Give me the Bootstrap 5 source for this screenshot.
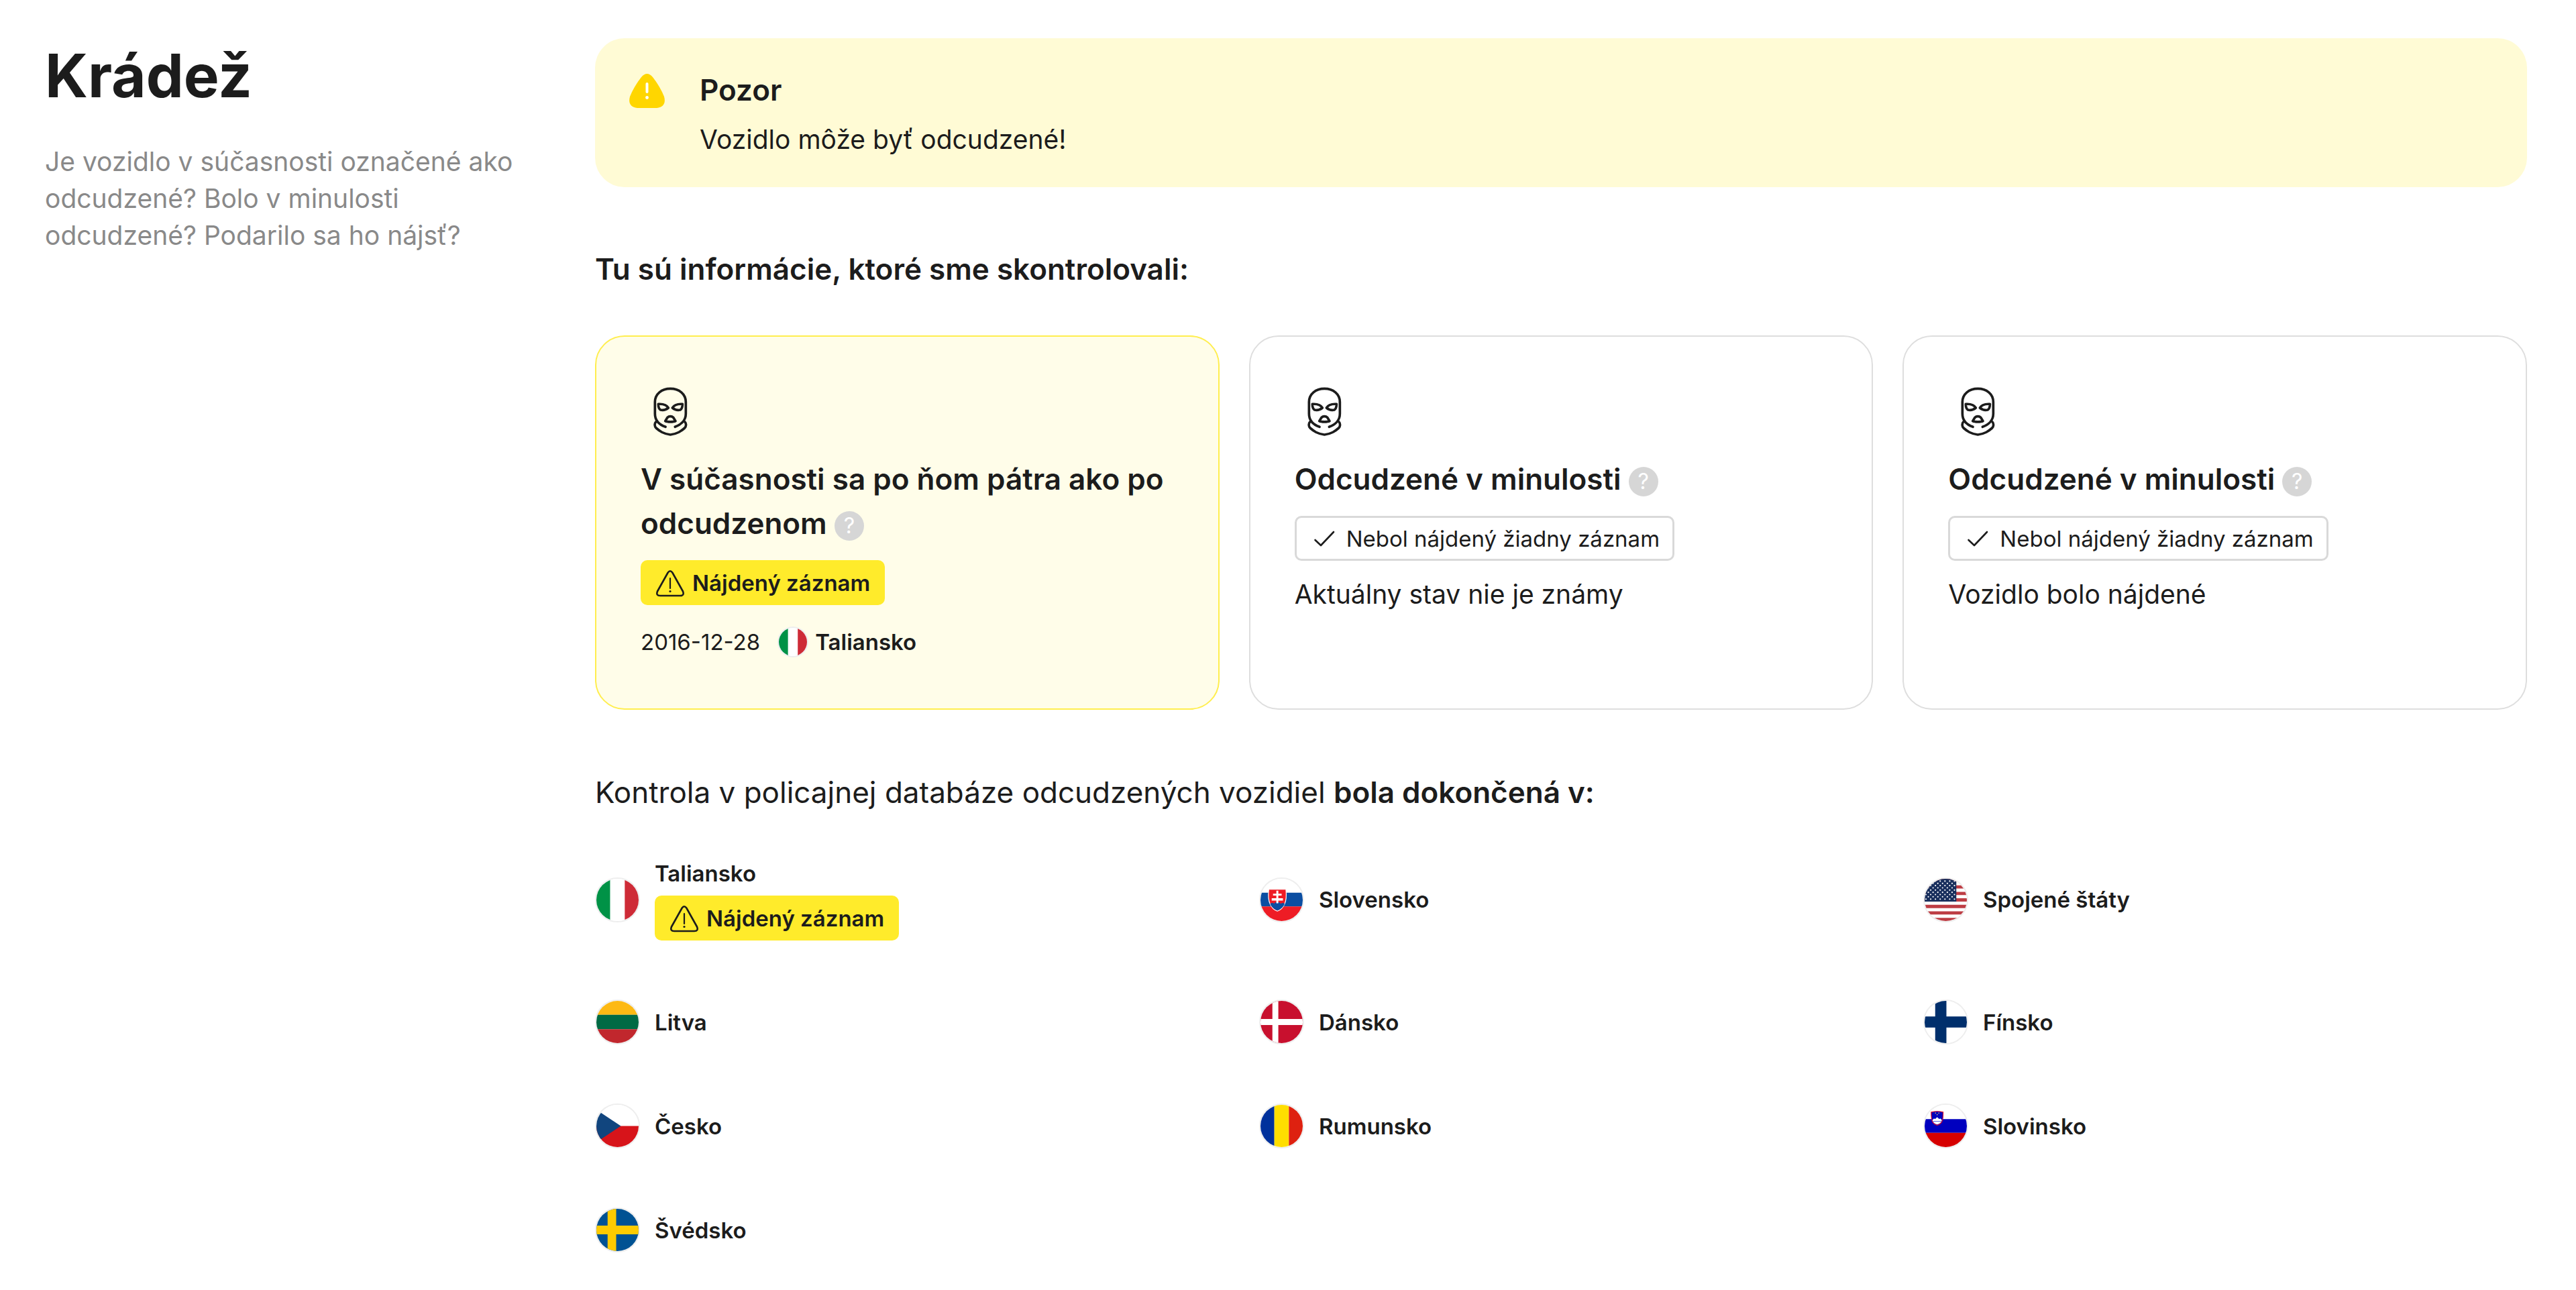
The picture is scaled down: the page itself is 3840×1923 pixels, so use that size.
<!DOCTYPE html>
<html lang="sk">
<head>
<meta charset="utf-8">
<meta name="viewport" content="width=device-width, initial-scale=1">
<title>Krádež</title>
<link href="https://cdn.jsdelivr.net/npm/bootstrap@5.3.0/dist/css/bootstrap.min.css" rel="stylesheet">
<script src="https://cdn.jsdelivr.net/npm/bootstrap@5.3.0/dist/js/bootstrap.bundle.min.js" defer></script>
<style>
  body { font-family: Inter, "Liberation Sans", sans-serif; color: #1c1c1c; font-size: 39px; line-height: 55px; background: #fff; }
  .page-wrap { padding: 57px 73px 57px 67px; }
  .intro-col { flex: 0 0 820px; padding: 3px 88px 0 0; }
  .intro-col h1 { font-size: 89px; line-height: 106px; font-weight: 700; margin-bottom: 47px; }
  .intro-col p { color: #898989; }
  .notice-box { background: #fffbd5; border-radius: 44px; padding: 44px 51px; gap: 52px; margin-bottom: 89px; }
  .notice-box svg { width: 53px; height: 51px; margin-top: 9px; }
  .notice-box h2 { margin-bottom: 13px; }
  .heading-md { font-size: 44px; line-height: 66px; font-weight: 600; }
  .section-title { margin-bottom: 66px; }
  .result-grid { display: grid; grid-template-columns: repeat(3, minmax(0, 1fr)); gap: 44px; margin-bottom: 90px; }
  .result-card { border: 2px solid #dedede; border-radius: 44px; padding: 66px; }
  .result-card.found { background: #fffde9; border-color: #ffee4f; }
  .result-icon { width: 88px; height: 88px; margin-bottom: 25px; }
  .result-card h3 { margin-bottom: 22px; }
  .help-btn { width: 44px; height: 44px; border-radius: 50%; background: #d6d6d6; color: #fff; font-size: 32px; line-height: 44px; font-weight: 400; vertical-align: middle; }
  .status-tag { height: 67px; padding: 0 22px; gap: 11px; border-radius: 10px; font-size: 33px; line-height: 44px; }
  .status-tag svg { width: 44px; height: 44px; }
  .tag-warn { background: #ffeb2b; font-weight: 600; }
  .tag-none { border: 3px solid #d9d9d9; background: #fff; padding: 0 19px; }
  .result-card .status-tag { margin-bottom: 22px; }
  .record-line { font-size: 33px; line-height: 66px; }
  .record-line time { margin-right: 26px; }
  .country-grid { display: grid; grid-template-columns: repeat(3, minmax(0, 1fr)); gap: 88px 90px; font-size: 33px; line-height: 44px; font-weight: 600; }
  .country-item { gap: 22px; }
  .country-item .status-tag { margin-top: 11px; }
  .flag-disc { width: 67px; height: 67px; border: 2px solid #eee; border-radius: 50%; background: #fff; }
  .flag-mini { width: 46px; height: 46px; margin-right: 10px; }
</style>
</head>
<body>
<svg class="d-none" aria-hidden="true">
  <symbol id="i-mask" viewBox="18 24 264 264">
    <g fill="none" stroke="#1c1c1c" stroke-width="11" stroke-linecap="round" stroke-linejoin="round">
      <path d="M129 229C104 220 82 201 82 170V118C82 82 112 58 151 58S220 82 220 118V170C220 201 197 220 172 229"/>
      <path d="M86 207C79 214 80 227 87 234C103 248 119 260 151 264C183 260 199 248 215 234C222 227 223 214 216 207"/>
      <path d="M97 127C113 126 134 130 142 144C132 152 121 156 107 153C99 149 97 138 97 127Z"/>
      <path d="M205 127C189 126 168 130 160 144C170 152 181 156 195 153C203 149 205 138 205 127Z"/>
      <path d="M138 187C145 180 157 180 164 187L174 203C165 208 137 208 128 203Z"/>
    </g>
  </symbol>
  <symbol id="i-warn" viewBox="0 0 44 44">
    <path d="M18.700 6.500Q22 2 25.300 6.500L41 34.500Q43.500 41 37 41H7Q.5 41 3 34.500Z" fill="none" stroke="#1c1c1c" stroke-width="2.600" stroke-linejoin="round"/>
    <path d="M22 15V30" stroke="#1c1c1c" stroke-width="2.200" stroke-linecap="round"/>
    <circle cx="22" cy="34.500" r="1.600" fill="#1c1c1c"/>
  </symbol>
  <symbol id="i-check" viewBox="0 0 44 44">
    <path d="M8.500 24L17 32L36 12" fill="none" stroke="#1c1c1c" stroke-width="2.600" stroke-linecap="round" stroke-linejoin="round"/>
  </symbol>
  <symbol id="f-it" viewBox="0 0 64 64"><path fill="#009246" d="M0 0h21v64H0z"/><path fill="#fff" d="M21 0h22v64H21z"/><path fill="#ce2b37" d="M43 0h21v64H43z"/></symbol>
  <symbol id="f-lt" viewBox="0 0 64 64"><path fill="#fdb913" d="M0 0h64v21H0z"/><path fill="#006a44" d="M0 21h64v22H0z"/><path fill="#c1272d" d="M0 43h64v21H0z"/></symbol>
  <symbol id="f-cz" viewBox="0 0 64 64"><path fill="#fff" d="M0 0h64v32H0z"/><path fill="#d7141a" d="M0 32h64v32H0z"/><path fill="#11457e" d="M-11 0L37 32L-11 64z"/></symbol>
  <symbol id="f-se" viewBox="0 0 64 64"><path fill="#005293" d="M0 0h64v64H0z"/><path fill="#fecb00" d="M17 0h13v64H17zM0 25.500h64v13H0z"/></symbol>
  <symbol id="f-sk" viewBox="0 0 64 64">
    <path fill="#fff" d="M0 0h64v21H0z"/><path fill="#0b4ea2" d="M0 21h64v21H0z"/><path fill="#ee1c25" d="M0 42h64v22H0z"/>
    <path fill="#ee1c25" stroke="#fff" stroke-width="1.200" d="M12.500 16h26c1 9 1 16-2 22c-2 5-6 9-11 11c-5-2-9-6-11-11c-3-6-3-13-2-22z"/>
    <path fill="#0b4ea2" d="M14.600 38c2-2 5-2 6 0c1-4 9-4 10 0c2-2 4-2 6 0c-2 5-6 8-11 10c-5-2-9-5-11-10z"/>
    <path fill="#fff" d="M24 18h3v4.500h5v3h-5v4h7v3.500h-7v4h-3v-4h-7v-3.500h7v-4h-5v-3h5z"/>
  </symbol>
  <symbol id="f-dk" viewBox="0 0 64 64"><path fill="#c8102e" d="M0 0h64v64H0z"/><path fill="#fff" d="M18 0h9v64h-9zM0 27.500h64v9H0z"/></symbol>
  <symbol id="f-ro" viewBox="0 0 64 64"><path fill="#00319c" d="M0 0h21v64H0z"/><path fill="#ffde00" d="M21 0h22v64H21z"/><path fill="#de2110" d="M43 0h21v64H43z"/></symbol>
  <symbol id="f-us" viewBox="0 0 64 64">
    <path fill="#fff" d="M0 0h64v64H0z"/>
    <path stroke="#bd3d44" stroke-width="4.900" d="M0 2.500h64M0 12.300h64M0 22.200h64M0 32h64M0 41.900h64M0 51.700h64M0 61.500h64"/>
    <path fill="#192f5d" d="M0 0h48v34.500H0z"/>
    <path stroke="#fff" stroke-width="2.200" stroke-linecap="round" stroke-dasharray="0 7.200" d="M2 3.500h45M2 10.300h45M2 17.100h45M2 23.900h45M2 30.800h45M5.600 6.900h40M5.600 13.700h40M5.600 20.500h40M5.600 27.300h40"/>
  </symbol>
  <symbol id="f-fi" viewBox="0 0 64 64"><path fill="#fff" d="M0 0h64v64H0z"/><path fill="#002f6c" d="M16 0h17v64H16zM0 23.500h64v17H0z"/></symbol>
  <symbol id="f-si" viewBox="0 0 64 64">
    <path fill="#fff" d="M0 0h64v21.500H0z"/><path fill="#0000bf" d="M0 21.500h64v21H0z"/><path fill="#d60000" d="M0 42.500h64v22H0z"/>
    <path fill="#0000bf" stroke="#d6002a" stroke-width="1.200" d="M10 11c6-1.500 12-1.500 18 0c0 8 0 11-2 15c-2 3-4 4-7 5c-3-1-5-2-7-5c-2-4-2-7-2-15z"/>
    <path fill="#fff" d="M11.800 23l2.500-2.500l1.500 1l3.200-3l3.200 3l1.500-1l2.500 2.500c-1 3.500-3 5.500-7.200 6.800c-4.200-1.300-6.200-3.300-7.200-6.800z"/>
    <path stroke="#4a5be0" stroke-width="1" d="M13 25h12"/>
    <g fill="#ffde5a"><circle cx="16.500" cy="12.500" r=".8"/><circle cx="21.500" cy="12.500" r=".8"/><circle cx="19" cy="15" r=".8"/></g>
  </symbol>
</svg>

<div class="page-wrap d-flex align-items-start">
  <aside class="intro-col">
    <h1>Krádež</h1>
    <p class="mb-0">Je vozidlo v súčasnosti označené ako odcudzené? Bolo v minulosti odcudzené? Podarilo sa ho nájsť?</p>
  </aside>

  <main class="flex-grow-1">
    <div class="notice-box d-flex align-items-start" role="alert">
      <svg viewBox="0 0 53 51" aria-hidden="true">
        <path fill="#ffd600" d="M18 5Q26.500-5 35 5Q46 19 52 34Q56 49 41 51H12Q-3 49 1 34Q7 19 18 5Z"/>
        <path d="M26.500 15V27" stroke="#fff" stroke-width="4" stroke-linecap="round"/>
        <circle cx="26.500" cy="35.500" r="2.400" fill="#fff"/>
      </svg>
      <div>
        <h2 class="heading-md">Pozor</h2>
        <p class="mb-0">Vozidlo môže byť odcudzené!</p>
      </div>
    </div>

    <h2 class="heading-md section-title">Tu sú informácie, ktoré sme skontrolovali:</h2>

    <div class="result-grid">
      <article class="result-card found">
        <svg class="result-icon d-block" aria-hidden="true"><use href="#i-mask"/></svg>
        <h3 class="heading-md">V súčasnosti sa po ňom pátra ako po odcudzenom <button type="button" class="help-btn border-0 p-0 text-center">?</button></h3>
        <div class="d-flex"><span class="status-tag tag-warn d-flex align-items-center"><svg aria-hidden="true"><use href="#i-warn"/></svg>Nájdený záznam</span></div>
        <div class="record-line d-flex align-items-center">
          <time datetime="2016-12-28">2016-12-28</time>
          <svg class="flag-disc flag-mini" viewBox="0 0 64 64" aria-hidden="true"><use href="#f-it"/></svg>
          <span class="fw-semibold">Taliansko</span>
        </div>
      </article>
      <article class="result-card">
        <svg class="result-icon d-block" aria-hidden="true"><use href="#i-mask"/></svg>
        <h3 class="heading-md">Odcudzené v minulosti <button type="button" class="help-btn border-0 p-0 text-center">?</button></h3>
        <div class="d-flex"><span class="status-tag tag-none d-flex align-items-center"><svg aria-hidden="true"><use href="#i-check"/></svg>Nebol nájdený žiadny záznam</span></div>
        <p class="mb-0">Aktuálny stav nie je známy</p>
      </article>
      <article class="result-card">
        <svg class="result-icon d-block" aria-hidden="true"><use href="#i-mask"/></svg>
        <h3 class="heading-md">Odcudzené v minulosti <button type="button" class="help-btn border-0 p-0 text-center">?</button></h3>
        <div class="d-flex"><span class="status-tag tag-none d-flex align-items-center"><svg aria-hidden="true"><use href="#i-check"/></svg>Nebol nájdený žiadny záznam</span></div>
        <p class="mb-0">Vozidlo bolo nájdené</p>
      </article>
    </div>

    <h2 class="heading-md section-title fw-normal">Kontrola v policajnej databáze odcudzených vozidiel <span class="fw-semibold">bola dokončená v:</span></h2>

    <ul class="country-grid list-unstyled mb-0">
      <li class="country-item d-flex align-items-center">
        <svg class="flag-disc" viewBox="0 0 64 64" aria-hidden="true"><use href="#f-it"/></svg>
        <div>
          <div>Taliansko</div>
          <span class="status-tag tag-warn d-flex align-items-center"><svg aria-hidden="true"><use href="#i-warn"/></svg>Nájdený záznam</span>
        </div>
      </li>
      <li class="country-item d-flex align-items-center"><svg class="flag-disc" viewBox="0 0 64 64" aria-hidden="true"><use href="#f-sk"/></svg>Slovensko</li>
      <li class="country-item d-flex align-items-center"><svg class="flag-disc" viewBox="0 0 64 64" aria-hidden="true"><use href="#f-us"/></svg>Spojené štáty</li>
      <li class="country-item d-flex align-items-center"><svg class="flag-disc" viewBox="0 0 64 64" aria-hidden="true"><use href="#f-lt"/></svg>Litva</li>
      <li class="country-item d-flex align-items-center"><svg class="flag-disc" viewBox="0 0 64 64" aria-hidden="true"><use href="#f-dk"/></svg>Dánsko</li>
      <li class="country-item d-flex align-items-center"><svg class="flag-disc" viewBox="0 0 64 64" aria-hidden="true"><use href="#f-fi"/></svg>Fínsko</li>
      <li class="country-item d-flex align-items-center"><svg class="flag-disc" viewBox="0 0 64 64" aria-hidden="true"><use href="#f-cz"/></svg>Česko</li>
      <li class="country-item d-flex align-items-center"><svg class="flag-disc" viewBox="0 0 64 64" aria-hidden="true"><use href="#f-ro"/></svg>Rumunsko</li>
      <li class="country-item d-flex align-items-center"><svg class="flag-disc" viewBox="0 0 64 64" aria-hidden="true"><use href="#f-si"/></svg>Slovinsko</li>
      <li class="country-item d-flex align-items-center"><svg class="flag-disc" viewBox="0 0 64 64" aria-hidden="true"><use href="#f-se"/></svg>Švédsko</li>
    </ul>
  </main>
</div>
</body>
</html>
